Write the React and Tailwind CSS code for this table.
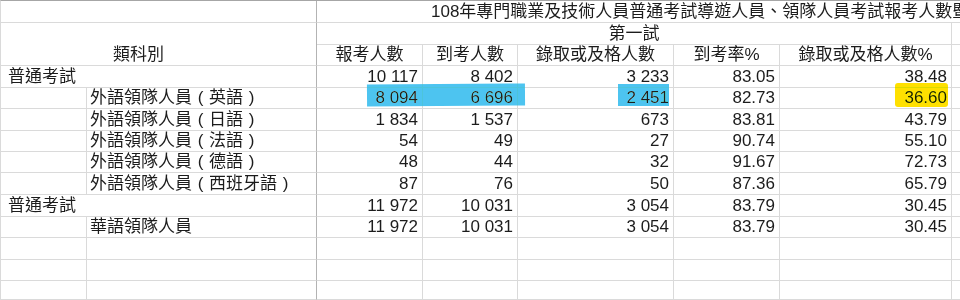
import React from 'react';

const line = 'border-[#dadada]';
const dark = 'border-r-[#b3b3b3]';

function Cell({ className = '', children }) {
  return (
    <div className={`border-b border-r ${line} flex items-end pb-[1px] px-[4px] whitespace-nowrap overflow-hidden leading-[18px] ${className}`}>
      {children}
    </div>
  );
}

// full-width bracket, glyph centred in its em box
const P = ({ c }) => <span className="inline-block w-[17px] text-center">{c}</span>;

const lang = (l) => (
  <span>外語領隊人員<P c="(" />{l}<P c=")" /></span>
);

const rows = [
  { group: '普通考試', v: ['10 117', '8 402', '3 233', '83.05', '38.48'] },
  { name: lang('英語'), v: ['8 094', '6 696', '2 451', '82.73', '36.60'] },
  { name: lang('日語'), v: ['1 834', '1 537', '673', '83.81', '43.79'] },
  { name: lang('法語'), v: ['54', '49', '27', '90.74', '55.10'] },
  { name: lang('德語'), v: ['48', '44', '32', '91.67', '72.73'] },
  { name: lang('西班牙語'), v: ['87', '76', '50', '87.36', '65.79'] },
  { group: '普通考試', v: ['11 972', '10 031', '3 054', '83.79', '30.45'] },
  { name: '華語領隊人員', v: ['11 972', '10 031', '3 054', '83.79', '30.45'] },
];

const heads = ['報考人數', '到考人數', '錄取或及格人數', '到考率%', '錄取或及格人數%'];

export default function App() {
  return (
    <div className="relative w-[960px] h-[300px] overflow-hidden bg-white text-[17px] text-[#1c1c1c] font-['Liberation_Sans','Noto_Sans_CJK_TC',sans-serif]">
      <div className="grid grid-cols-[86px_230px_106px_95px_156px_106px_172px_9px] grid-rows-[22px_22px_21px_22px_21px_22px_21px_21px_22px_22px_21px_22px_21px_19px] border-t border-l border-t-[#a6a6a6] border-l-[#dadada]">
        {/* title row */}
        <Cell className={`col-span-2 ${dark}`} />
        <Cell className="col-span-6 border-r-0 pl-[114px]">
          108年專門職業及技術人員普通考試導遊人員、領隊人員考試報考人數暨
        </Cell>

        {/* header rows */}
        <Cell className={`col-span-2 row-span-2 ${dark} pl-[112px]`}>類科別</Cell>
        <Cell className="col-span-5 justify-center">第一試</Cell>
        <Cell />
        {heads.map((h) => (
          <Cell key={h} className="justify-center">{h}</Cell>
        ))}
        <Cell />

        {/* data */}
        {rows.map((r, i) => (
          <React.Fragment key={i}>
            {r.group ? (
              <Cell className={`col-span-2 ${dark} pl-[7px]`}>{r.group}</Cell>
            ) : (
              <>
                <Cell />
                <Cell className={`${dark} pl-[3px]`}>{r.name}</Cell>
              </>
            )}
            {r.v.map((n, j) => (
              <Cell key={j} className="justify-end">{n}</Cell>
            ))}
            <Cell />
          </React.Fragment>
        ))}

        {/* empty rows */}
        {[0, 1, 2].map((i) => (
          <React.Fragment key={`e${i}`}>
            <Cell />
            <Cell className={dark} />
            <Cell />
            <Cell />
            <Cell />
            <Cell />
            <Cell />
            <Cell />
          </React.Fragment>
        ))}
      </div>

      {/* marker highlights */}
      <div className="absolute left-[367px] top-[84px] w-[158px] h-[22px] bg-[#4dc4f0] mix-blend-darken -rotate-[0.4deg]" />
      <div className="absolute left-[618px] top-[84px] w-[51px] h-[22px] bg-[#4dc4f0] mix-blend-darken" />
      <div className="absolute left-[895px] top-[83px] w-[53px] h-[24px] bg-[#ffe000] rounded-[3px] mix-blend-darken" />
    </div>
  );
}
